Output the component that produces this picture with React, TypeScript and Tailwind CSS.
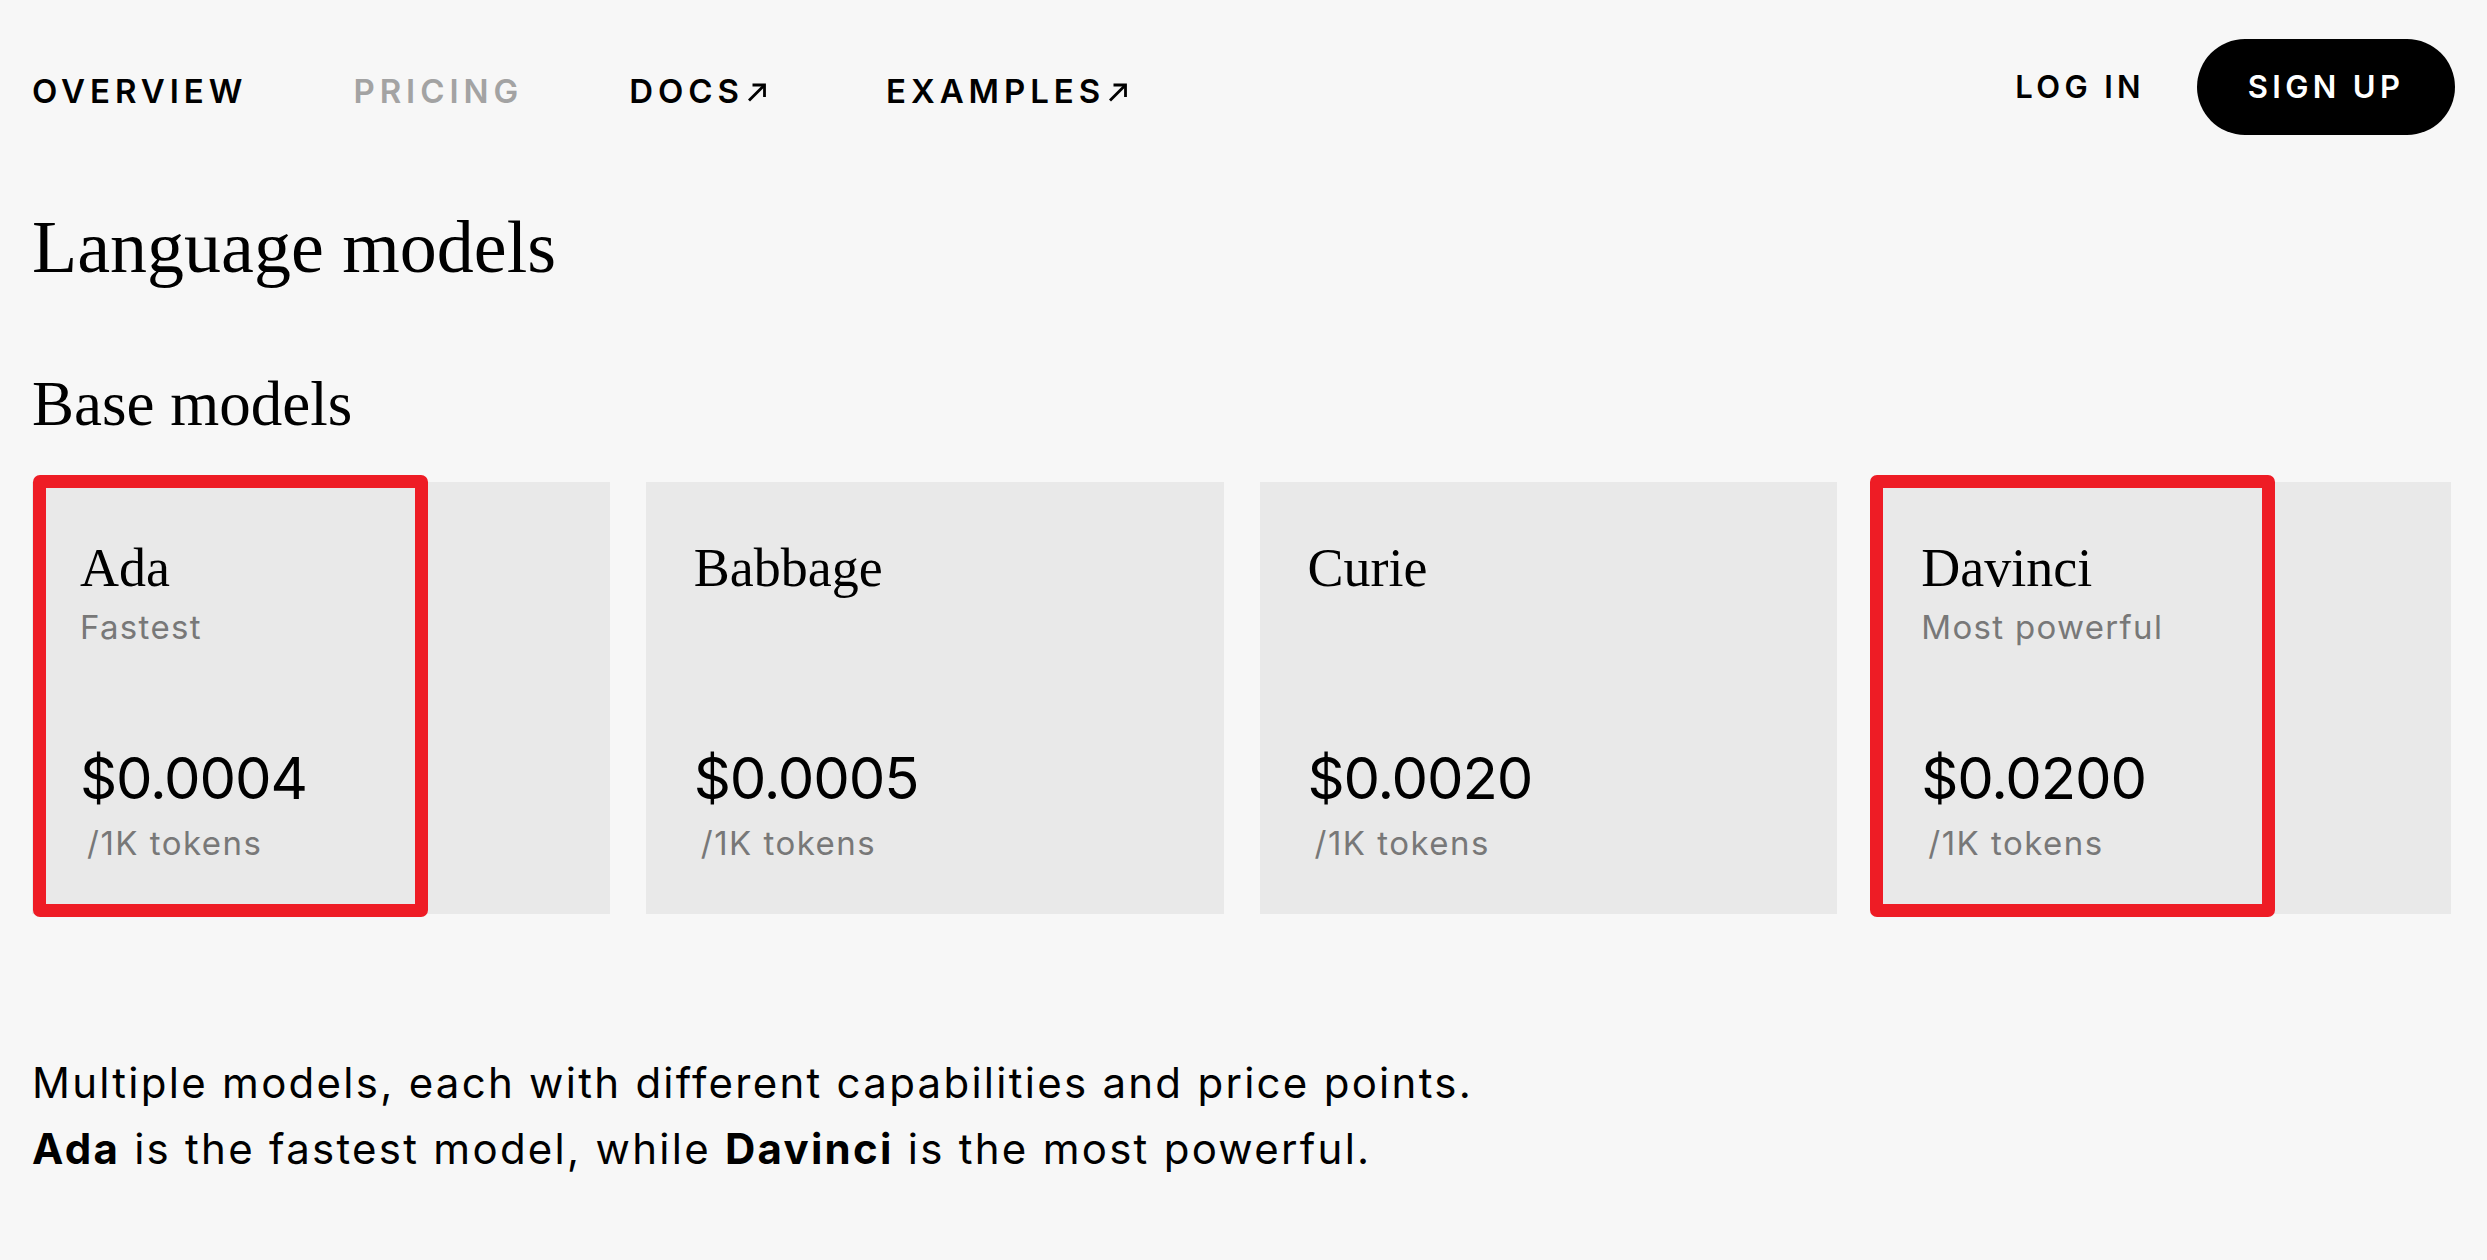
const sans = { fontFamily: 'Inter, "Noto Sans", sans-serif' };
const serif = { fontFamily: '"Liberation Serif", "DejaVu Serif", serif' };

type Model = {
  name: string;
  tag?: string;
  price: string;
  marked?: 'ada' | 'davinci';
};

const models: Model[] = [
  { name: 'Ada', tag: 'Fastest', price: '$0.0004', marked: 'ada' },
  { name: 'Babbage', price: '$0.0005' },
  { name: 'Curie', price: '$0.0020' },
  { name: 'Davinci', tag: 'Most powerful', price: '$0.0200', marked: 'davinci' },
];

function ArrowUpRight() {
  return (
    <svg
      width="22"
      height="22"
      viewBox="0 0 22 22"
      fill="none"
      stroke="currentColor"
      strokeWidth="2.8"
      className="ml-[2px] mr-[12px]"
    >
      <path d="M3 19.5 L18.5 4" />
      <path d="M6.5 4 H18.5 V16" />
    </svg>
  );
}

function NavLink({
  label,
  muted,
  external,
}: {
  label: string;
  muted?: boolean;
  external?: boolean;
}) {
  return (
    <a
      href="#"
      className={
        muted
          ? 'flex items-center text-[33px] font-semibold tracking-[0.15em] text-[#a3a3a3]'
          : 'flex items-center text-[33px] font-semibold tracking-[0.15em] text-black'
      }
    >
      {label}
      {external && <ArrowUpRight />}
    </a>
  );
}

function ModelCard({ model }: { model: Model }) {
  return (
    <div className="relative flex h-[432px] flex-col justify-between bg-[#e9e9e9] pl-[48px] pt-[59px] pb-[54px]">
      <div className="flex flex-col">
        <h3 className="text-[54px] leading-none text-black" style={serif}>
          {model.name}
        </h3>
        {model.tag && (
          <p className="mt-4 text-[33px] leading-none tracking-[0.04em] text-[#787878]" style={sans}>
            {model.tag}
          </p>
        )}
      </div>
      <div className="flex flex-col" style={sans}>
        <p className="text-[58px] leading-none tracking-[-0.02em] text-black">{model.price}</p>
        <p className="mt-5 pl-[7px] text-[33px] leading-none tracking-[0.045em] text-[#787878]">
          /1K tokens
        </p>
      </div>
      {model.marked === 'ada' && (
        <div className="pointer-events-none absolute left-[1px] top-[-7px] h-[442px] w-[395px] rounded-[7px] border-[13px] border-[#ee1c25]" />
      )}
      {model.marked === 'davinci' && (
        <div className="pointer-events-none absolute left-[-3px] top-[-7px] h-[442px] w-[405px] rounded-[7px] border-[13px] border-[#ee1c25]" />
      )}
    </div>
  );
}

export default function App() {
  return (
    <main className="min-h-screen bg-[#f7f7f7] px-[32px] pt-[39px] pb-20" style={sans}>
      <header className="flex h-[96px] items-center justify-between">
        <nav className="flex items-center gap-[106px] pt-[10px]">
          <NavLink label="OVERVIEW" />
          <NavLink label="PRICING" muted />
          <NavLink label="DOCS" external />
          <NavLink label="EXAMPLES" external />
        </nav>
        <div className="flex items-center gap-[52px]">
          <a href="#" className="text-[31px] font-semibold tracking-[0.14em] text-black">
            LOG IN
          </a>
          <button className="flex h-[96px] w-[258px] items-center justify-center rounded-full bg-black text-[31px] font-semibold tracking-[0.14em] text-white">
            SIGN UP
          </button>
        </div>
      </header>

      <h1 className="mt-[75px] text-[74px] leading-none text-black" style={serif}>
        Language models
      </h1>

      <h2 className="mt-[89px] text-[63px] leading-none text-black" style={serif}>
        Base models
      </h2>

      <section className="mt-[46px] grid w-[2419px] grid-cols-4 gap-[36px]">
        {models.map((m) => (
          <ModelCard key={m.name} model={m} />
        ))}
      </section>

      <div className="mt-[136px] text-[42px] leading-[66px] tracking-[0.054em] text-black">
        <p>Multiple models, each with different capabilities and price points.</p>
        <p>
          <strong className="font-bold">Ada</strong> is the fastest model, while{' '}
          <strong className="font-bold">Davinci</strong> is the most powerful.
        </p>
      </div>
    </main>
  );
}
